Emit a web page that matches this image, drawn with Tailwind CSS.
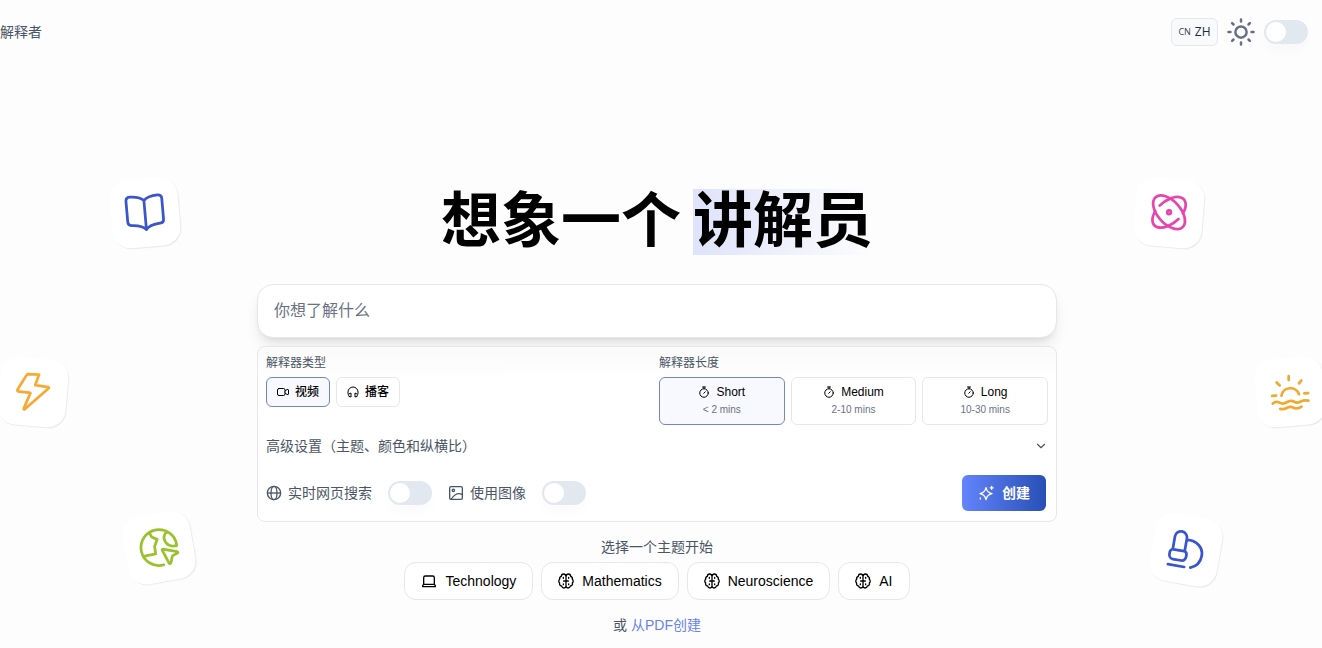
<!DOCTYPE html>
<html lang="zh-CN">
<head>
<meta charset="utf-8">
<meta name="viewport" content="width=device-width, initial-scale=1">
<title>解释者</title>
<script src="https://cdn.jsdelivr.net/npm/@tailwindcss/browser@4"></script>
</head>
<body class="relative min-h-screen overflow-x-hidden bg-[#fdfdfd] font-['Liberation_Sans','Noto_Sans_CJK_SC',sans-serif] text-sm text-gray-600">

<svg class="hidden" aria-hidden="true">
  <symbol id="brain" viewBox="0 0 24 24">
    <path d="M12 5C11.600 2.800 10.400 1.500 8.500 1.500 6.500 1.500 5 3 5 5 2.900 5.700 2 7.400 2.500 9.500.800 11 .800 13.500 2.400 15 2 17.500 3.200 19.200 5.300 19.500 6 21.500 7.200 22.500 9 22.500c1.700 0 2.700-1 3-3 .3 2 1.300 3 3 3 1.800 0 3-1 3.700-3 2.100-.3 3.300-2 2.900-4.500 1.600-1.500 1.600-4-.1-5.500.5-2.100-.4-3.800-2.500-4.500 0-2-1.500-3.500-3.500-3.500-1.900 0-3.100 1.300-3.500 3.500Zm0 0v14.500M8.500 12h7M8 6.500v1.500M16 6.500v1.500M8 16.500v1M16 16.500v1"/>
  </symbol>
  <symbol id="timer" viewBox="0 0 24 24">
    <path d="M9 2h6M12 2v3.500M11.500 14.500l3-3"/><circle cx="12" cy="14" r="8.500"/>
  </symbol>
</svg>

<!-- Floating topic tiles -->
<div aria-hidden="true" class="pointer-events-none absolute inset-0 overflow-hidden">
  <div class="absolute top-[179px] left-[111px] size-[68px] -rotate-5 rounded-[18px] bg-white p-3 text-[#3a56cc] shadow-[1px_1px_1px_rgba(0,0,0,0.08)]">
    <svg class="size-11" viewBox="0 0 24 24" fill="none" stroke="currentColor" stroke-width="1.500" stroke-linecap="round" stroke-linejoin="round"><path d="M12 5.200C10.600 3.600 8.200 2.800 4.400 2.700 3 2.700 2.200 3.500 2.200 4.800v11.400c0 1.300.8 2 2.100 2 3.800.2 6.300 1 7.700 2.900 1.400-1.900 3.900-2.700 7.700-2.900 1.300 0 2.100-.7 2.100-2V4.800c0-1.300-.8-2.100-2.200-2.100-3.800.1-6.200.9-7.600 2.500Zm0 0v15.900"/></svg>
  </div>
  <div class="absolute top-[179px] right-[119px] size-[68px] rotate-5 rounded-[18px] bg-white p-3 text-[#e645b0] shadow-[1px_1px_1px_rgba(0,0,0,0.08)]">
    <svg class="size-11" viewBox="0 0 24 24" fill="none" stroke="currentColor" stroke-width="1.500" stroke-linecap="round"><g transform="translate(12 11.600)"><ellipse rx="11" ry="6.200" transform="rotate(43)"/><path transform="rotate(-46)" d="M-1.500-6.100A11 6.200 0 0 1 5.300 5.400M1.500 6.100A11 6.200 0 0 1-5.300-5.400"/><circle r="1"/></g></svg>
  </div>
  <div class="absolute top-[358px] left-[-1px] size-[68px] rotate-5 rounded-[18px] bg-white p-3 text-[#f8a932] shadow-[1px_1px_1px_rgba(0,0,0,0.08)]">
    <svg class="size-11" viewBox="0 0 24 24" fill="none" stroke="currentColor" stroke-width="1.500" stroke-linecap="round" stroke-linejoin="round"><path transform="rotate(-5 12 12)" d="M9.300 2.200 15.300 2.500 13.200 8.300 20.300 9.300Q21 9.600 20.400 10.100L7.600 21.300Q6.800 21.800 7 20.900L10.600 12.500 3.900 11.700Q3.300 11.400 3.500 10.800L8.500 2.800Q8.800 2.200 9.300 2.200Z"/></svg>
  </div>
  <div class="absolute top-[358px] right-[-2px] size-[68px] -rotate-5 rounded-[18px] bg-white p-3 text-[#f2a92f] shadow-[1px_1px_1px_rgba(0,0,0,0.08)]">
    <svg class="size-11" viewBox="0 0 24 24" fill="none" stroke="currentColor" stroke-width="1.500" stroke-linecap="round" stroke-linejoin="round"><path transform="rotate(5 12 12)" d="M11.300 3.300v2.200M4.700 6.800 6.400 8.400M18.200 5.700 16.900 7.300M2.300 14.100 4.400 14M19.800 12.700 21.900 12.600M7.300 14A5 5 0 0 1 16.900 13.200M2.600 18.300C4 17.100 5 17.100 6.300 17.800S9 18.400 10.300 17.600 13 16.600 14.300 17.300 17 17.800 18.300 17 20.600 16.400 22 16.700M6.700 21.200C8.500 21.700 9.500 21.100 10.600 20.500S13 20.100 14.300 20.700 17 20.900 18.300 20"/></svg>
  </div>
  <div class="absolute top-[514px] left-[125px] size-[68px] -rotate-10 rounded-[18px] bg-white p-3 text-[#9bc22e] shadow-[1px_1px_1px_rgba(0,0,0,0.08)]">
    <svg class="size-11" viewBox="0 0 24 24" fill="none" stroke="currentColor" stroke-width="1.500" stroke-linecap="round" stroke-linejoin="round"><path transform="rotate(10 12 12)" d="M21.700 10.600A9.800 9.800 0 1 0 14.600 21.200M6.700 3.600 8 6 11 7.300 9.600 11.200 10.200 15.200 4.200 16.400M16.200 3C14.300 5 14.400 7 15.600 8.900 17 11 19 11.300 21.700 10.700M14.100 12.600 21.900 14Q22.700 14.300 22 14.800L19.300 16.300 18.500 20.100Q18 20.900 17.500 20.300L13.800 13.300Q13.600 12.700 14.100 12.600Z"/></svg>
  </div>
  <div class="absolute top-[516px] right-[102px] size-[68px] rotate-10 rounded-[18px] bg-white p-3 text-[#3a56cc] shadow-[1px_1px_1px_rgba(0,0,0,0.08)]">
    <svg class="size-11" viewBox="0 0 24 24" fill="none" stroke="currentColor" stroke-width="1.500" stroke-linecap="round" stroke-linejoin="round"><path d="M4.800 12.800V5.700a3.300 3.300 0 0 1 6.600 0v7.100M5.200 12.800h5.800a1.700 1.700 0 0 1 1.700 1.700v1.300a2.300 2.300 0 0 1-2.300 2.300H5.800a2.300 2.300 0 0 1-2.300-2.300v-1.300a1.700 1.700 0 0 1 1.700-1.700ZM3.600 21.300h9M11.500 6.500C17 5.700 21 9.200 21 13.600c0 3.400-2 6.200-5 7.500"/></svg>
  </div>
</div>

<header class="relative flex h-16 items-center justify-between pr-3.5">
  <a href="#" class="text-gray-600">解释者</a>
  <div class="flex items-center gap-2">
    <button type="button" class="flex h-7 w-[47px] items-center justify-center gap-1 rounded-md border border-gray-200 bg-slate-50 font-['Open_Sans'] text-xs text-gray-800"><span class="text-[9px] text-gray-700">CN</span><span class="font-medium">ZH</span></button>
    <svg class="size-[30px] text-[#667085]" viewBox="0 0 24 24" fill="none" stroke="currentColor" stroke-width="2" stroke-linecap="round" aria-hidden="true"><circle cx="12" cy="12" r="4.500"/><path d="M12 2v1.600M12 20.400v1.600M2 12h1.600M20.400 12h1.600M4.900 4.900l1.100 1.100M18 18l1.100 1.100M4.900 19.100 6 18M18 6l1.100-1.100"/></svg>
    <input type="checkbox" role="switch" aria-label="深色模式" class="h-6 w-11 appearance-none rounded-full bg-slate-200 p-0.5 shadow-[0_8px_12px_rgba(0,0,0,0.02)] before:block before:size-5 before:rounded-full before:bg-white checked:before:translate-x-5">
  </div>
</header>

<main class="relative flex flex-col items-center pt-[116px] pr-2">
  <h1 class="flex h-[84px] items-center text-6xl font-bold text-black">
    <span class="pr-3">想象一个</span>
    <span class="flex h-[66px] items-center bg-linear-to-r from-[#dfe3fb] to-transparent">讲解员</span>
  </h1>

  <form class="mt-5 flex w-full max-w-[800px] flex-col gap-2">
    <input type="text" aria-label="你想了解什么" placeholder="你想了解什么" class="h-[54px] w-full rounded-2xl border border-gray-200 bg-white px-4 text-base shadow-lg placeholder:text-gray-500">

    <div class="rounded-lg border border-gray-200 bg-linear-to-b from-[#fafafa] to-white to-20% p-2">
      <div class="grid grid-cols-2 gap-1">
        <fieldset>
          <legend class="h-4 text-xs leading-4">解释器类型</legend>
          <div class="mt-1.5 flex gap-1.5 text-xs font-medium text-black">
            <button type="button" aria-pressed="true" class="flex h-[30px] w-16 items-center justify-center gap-1.5 rounded-md border border-[#6f86cf] bg-[#f8f9ff]"><svg class="size-3" viewBox="0 0 24 24" fill="none" stroke="currentColor" stroke-width="2" stroke-linecap="round" stroke-linejoin="round" aria-hidden="true"><rect x="1" y="5" width="15" height="14" rx="3"/><path d="m16 10 4-3q3-1 3 1v8q0 2-3 1l-4-3"/></svg>视频</button>
            <button type="button" class="flex h-[30px] w-16 items-center justify-center gap-1.5 rounded-md border border-gray-200 bg-white"><svg class="size-3" viewBox="0 0 24 24" fill="none" stroke="currentColor" stroke-width="2" stroke-linecap="round" stroke-linejoin="round" aria-hidden="true"><path d="M4 20C2 18 2 15 2 12a10 10 0 0 1 20 0c0 3 0 6-2 8M4 21l4 1V14l-4 2M20 21l-4 1V14l4 2"/></svg>播客</button>
          </div>
        </fieldset>
        <fieldset>
          <legend class="h-4 text-xs leading-4">解释器长度</legend>
          <div class="mt-1.5 grid grid-cols-3 gap-1.5 text-xs text-black">
            <button type="button" aria-pressed="true" class="flex h-12 flex-col items-center justify-start gap-0.5 rounded-md border border-[#6f86cf] bg-[#f8f9ff] pt-1.5"><span class="flex items-center gap-1.5"><svg class="size-3" fill="none" stroke="currentColor" stroke-width="2" stroke-linecap="round" aria-hidden="true"><use href="#timer"/></svg>Short</span><span class="text-[10px] leading-4 text-gray-500">&lt; 2 mins</span></button>
            <button type="button" class="flex h-12 flex-col items-center justify-start gap-0.5 rounded-md border border-gray-200 bg-white pt-1.5"><span class="flex items-center gap-1.5"><svg class="size-3" fill="none" stroke="currentColor" stroke-width="2" stroke-linecap="round" aria-hidden="true"><use href="#timer"/></svg>Medium</span><span class="text-[10px] leading-4 text-gray-500">2-10 mins</span></button>
            <button type="button" class="flex h-12 flex-col items-center justify-start gap-0.5 rounded-md border border-gray-200 bg-white pt-1.5"><span class="flex items-center gap-1.5"><svg class="size-3" fill="none" stroke="currentColor" stroke-width="2" stroke-linecap="round" aria-hidden="true"><use href="#timer"/></svg>Long</span><span class="text-[10px] leading-4 text-gray-500">10-30 mins</span></button>
          </div>
        </fieldset>
      </div>

      <button type="button" class="mt-[9px] flex h-6 w-full items-center justify-between"><span>高级设置（主题、颜色和纵横比）</span><svg class="size-3.5" viewBox="0 0 24 24" fill="none" stroke="currentColor" stroke-width="2" stroke-linecap="round" stroke-linejoin="round" aria-hidden="true"><path d="m6 9 6 6 6-6"/></svg></button>

      <div class="mt-[17px] flex items-center gap-4 pr-0.5 pb-0.5">
        <label for="web" class="flex items-center gap-1.5"><svg class="size-4" viewBox="0 0 24 24" fill="none" stroke="currentColor" stroke-width="2" aria-hidden="true"><circle cx="12" cy="12" r="10"/><ellipse cx="12" cy="12" rx="4.500" ry="10"/><path d="M2 12h20"/></svg>实时网页搜索</label>
        <input id="web" type="checkbox" role="switch" class="h-6 w-11 appearance-none rounded-full bg-slate-200 p-0.5 shadow-[0_8px_12px_rgba(0,0,0,0.02)] before:block before:size-5 before:rounded-full before:bg-white checked:before:translate-x-5">
        <label for="images" class="flex items-center gap-1.5"><svg class="size-4" viewBox="0 0 24 24" fill="none" stroke="currentColor" stroke-width="2" stroke-linecap="round" stroke-linejoin="round" aria-hidden="true"><rect x="2.500" y="2.500" width="19" height="19" rx="2"/><circle cx="8" cy="8" r="1.800"/><path d="M5 21c4-6 9-10 16-7"/></svg>使用图像</label>
        <input id="images" type="checkbox" role="switch" class="h-6 w-11 appearance-none rounded-full bg-slate-200 p-0.5 shadow-[0_8px_12px_rgba(0,0,0,0.02)] before:block before:size-5 before:rounded-full before:bg-white checked:before:translate-x-5">
        <button type="submit" class="ml-auto flex h-9 items-center gap-2 rounded-md bg-linear-to-r from-[#6384fd] to-[#2750b5] px-4 font-bold text-white"><svg class="size-4" viewBox="0 0 24 24" fill="none" stroke="currentColor" stroke-width="2" stroke-linecap="round" stroke-linejoin="round" aria-hidden="true"><path d="M12 4q1.500 7.500 9 9-7.500 1.500-9 9-1.500-7.500-9-9 7.500-1.500 9-9ZM20.500 2v4.500M18.300 4.300h4.400M3.500 19.500v1.500"/></svg>创建</button>
      </div>
    </div>
  </form>

  <h2 class="mt-[15px] leading-5">选择一个主题开始</h2>
  <div class="mt-[5px] flex flex-wrap justify-center gap-2 text-black">
    <button type="button" class="flex h-[38px] items-center gap-2 rounded-xl border border-gray-200 bg-white px-4"><svg class="size-4" viewBox="0 0 24 24" fill="none" stroke="currentColor" stroke-width="2" stroke-linejoin="round" aria-hidden="true"><path d="M4 17V7q0-2.500 2.500-2.500h11Q20 4.500 20 7v10M4 17h16l1.500 2v1.500h-19V19Z"/></svg>Technology</button>
    <button type="button" class="flex h-[38px] items-center gap-2 rounded-xl border border-gray-200 bg-white px-4"><svg class="size-4" fill="none" stroke="currentColor" stroke-width="2" stroke-linecap="round" stroke-linejoin="round" aria-hidden="true"><use href="#brain"/></svg>Mathematics</button>
    <button type="button" class="flex h-[38px] items-center gap-2 rounded-xl border border-gray-200 bg-white px-4"><svg class="size-4" fill="none" stroke="currentColor" stroke-width="2" stroke-linecap="round" stroke-linejoin="round" aria-hidden="true"><use href="#brain"/></svg>Neuroscience</button>
    <button type="button" class="flex h-[38px] items-center gap-2 rounded-xl border border-gray-200 bg-white px-4"><svg class="size-4" fill="none" stroke="currentColor" stroke-width="2" stroke-linecap="round" stroke-linejoin="round" aria-hidden="true"><use href="#brain"/></svg>AI</button>
  </div>
  <p class="mt-[15px] leading-5">或 <a href="#" class="text-[#6683ef]">从PDF创建</a></p>
</main>
</body>
</html>
